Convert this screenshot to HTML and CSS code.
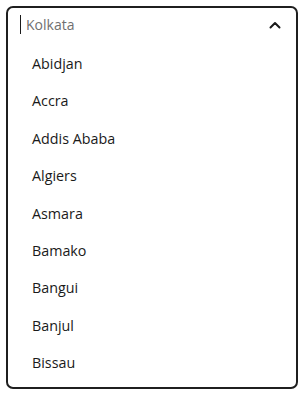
FILE: index.html
```html
<!DOCTYPE html>
<html lang="en">

<head>
  <meta charset="UTF-8" />
  <meta name="viewport" content="width=device-width, initial-scale=1.0" />
  <title>city picker</title>
  <link rel="stylesheet" href="styles.css">
</head>

<body>
  <div class="combo">
    <div class="combo-input">
      <span class="caret"></span>
      <span class="placeholder">Kolkata</span>
      <svg class="chevron" width="12" height="8" viewBox="0 0 12 8">
        <path d="M1.5 6.5 L6 2 L10.5 6.5" fill="none" stroke="#1a1a1a" stroke-width="2" stroke-linecap="round" stroke-linejoin="round" />
      </svg>
    </div>
    <ul class="options">
      <li>Abidjan</li>
      <li>Accra</li>
      <li>Addis Ababa</li>
      <li>Algiers</li>
      <li>Asmara</li>
      <li>Bamako</li>
      <li>Bangui</li>
      <li>Banjul</li>
      <li>Bissau</li>
    </ul>
  </div>
</body>

</html>
```

FILE: styles.css
```css
body {
  margin: 0;
  background: #ffffff;
  font-family: 'Open Sans', 'Noto Sans', sans-serif;
  color: #1a1a1a;
}

.combo {
  box-sizing: border-box;
  width: 292px;
  height: 383px;
  margin: 6px;
  border: 2px solid #1f1f1f;
  border-radius: 7px;
  overflow: hidden;
}

.combo-input {
  display: flex;
  align-items: center;
  height: 33px;
  padding: 0 15px 0 12px;
}

.caret {
  width: 1px;
  height: 19px;
  background: #1a1a1a;
  margin-right: 5px;
}

.placeholder {
  flex: 1;
  font-size: 14px;
  color: #707070;
}

.chevron {
  display: block;
}

.options {
  list-style: none;
  margin: 0;
  padding: 4px 0 0;
}

.options li {
  height: 37.4px;
  line-height: 37.4px;
  padding-left: 24px;
  font-size: 14.3px;
}
```
